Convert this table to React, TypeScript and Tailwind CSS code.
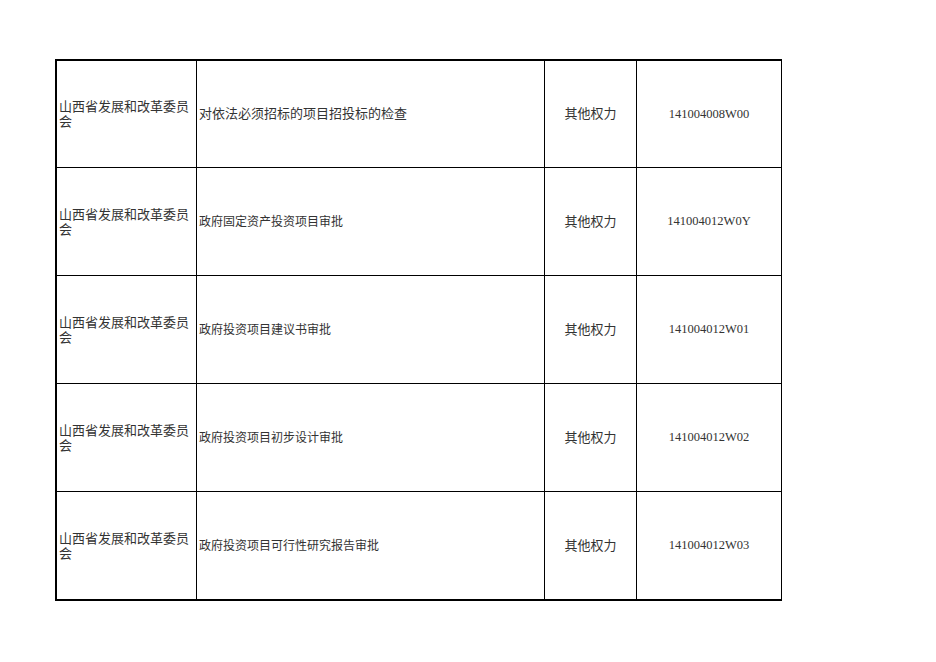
import React from 'react';

const rows = [
  { dept: '山西省发展和改革委员会', item: '对依法必须招标的项目招投标的检查', type: '其他权力', code: '141004008W00', big: true },
  { dept: '山西省发展和改革委员会', item: '政府固定资产投资项目审批', type: '其他权力', code: '141004012W0Y' },
  { dept: '山西省发展和改革委员会', item: '政府投资项目建议书审批', type: '其他权力', code: '141004012W01' },
  { dept: '山西省发展和改革委员会', item: '政府投资项目初步设计审批', type: '其他权力', code: '141004012W02' },
  { dept: '山西省发展和改革委员会', item: '政府投资项目可行性研究报告审批', type: '其他权力', code: '141004012W03' },
];

export default function App() {
  return (
    <div
      className="w-[936px] h-[662px] bg-white pt-[59px] pl-[55px] text-[#333]"
      style={{ fontFamily: '"Liberation Serif", "Noto Sans CJK SC", serif' }}
    >
      <div className="w-[727px] border-t-2 border-l-2 border-b-2 border-r border-black">
        {rows.map((r, i) => (
          <div key={i} className={`flex ${i > 0 ? 'h-[108px] border-t border-black' : 'h-[106px]'}`}>
            <div className="w-[139px] shrink-0 flex items-center pl-[2px] pr-1 text-[13px] leading-[15px]">
              {r.dept}
            </div>
            <div className={`w-[348px] shrink-0 border-l border-black flex items-center pl-[2px] ${r.big ? 'text-[13px]' : 'text-[12px]'}`}>
              {r.item}
            </div>
            <div className="w-[92px] shrink-0 border-l border-black flex items-center justify-center text-[13px]">
              {r.type}
            </div>
            <div className="flex-1 border-l border-black flex items-center justify-center text-[12.5px]">
              {r.code}
            </div>
          </div>
        ))}
      </div>
    </div>
  );
}
